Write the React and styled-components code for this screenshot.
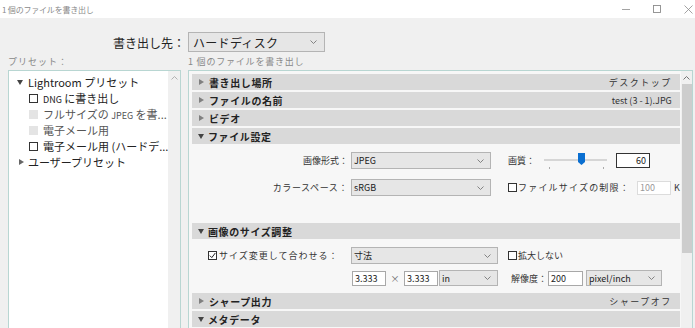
import React from 'react'
import styled, { createGlobalStyle } from 'styled-components'

const GlobalStyle = createGlobalStyle`
  html, body {
    margin: 0;
    padding: 0;
  }
  body {
    width: 695px;
    height: 328px;
    overflow: hidden;
    background: #f0f0f0;
    font-family: "Noto Sans CJK JP", "Liberation Sans", sans-serif;
    color: #333;
  }
  * { box-sizing: border-box; }
`

const Window = styled.div`
  width: 695px;
  height: 328px;
  display: flex;
  flex-direction: column;
  overflow: hidden;
  background: #f0f0f0;
`

const TitleBar = styled.div`
  height: 18px;
  flex-shrink: 0;
  background: #fff;
  display: flex;
  align-items: center;
  justify-content: space-between;
  padding-left: 2px;
`

const Title = styled.span`
  font-size: 8px;
  color: #8a8a8a;
  letter-spacing: -0.2px;
`

const WinControls = styled.div`
  display: flex;
  align-items: center;
  gap: 23px;
  padding-right: 2px;
  color: #8c8c8c;
`

const DestRow = styled.div`
  display: flex;
  align-items: center;
  margin-top: 14px;
  height: 20px;
`

const DestLabel = styled.span`
  width: 185px;
  text-align: right;
  font-size: 12px;
  color: #222;
  margin-right: 3px;
`

const Select = styled.div`
  width: ${p => p.w}px;
  height: ${p => p.h || 17}px;
  margin-left: ${p => p.ml || 0}px;
  border: 1px solid #b4b4b4;
  background: #e6e6e6;
  display: flex;
  align-items: center;
  justify-content: space-between;
  padding: 0 ${p => (p.big ? 7 : 6)}px 0 ${p => (p.big ? 4 : 2)}px;
  font-size: ${p => (p.big ? 12 : 9)}px;
  color: #222;
  flex-shrink: 0;
  letter-spacing: ${p => (p.big ? 0.3 : 0)}px;
`

const Columns = styled.div`
  flex: 1;
  display: grid;
  grid-template-columns: 173px 505px;
  column-gap: 7px;
  padding: 0 2px 0 8px;
  min-height: 0;
`

const Column = styled.div`
  display: flex;
  flex-direction: column;
  min-height: 0;
`

const Caption = styled.div`
  height: 18px;
  display: flex;
  align-items: center;
  font-size: 9px;
  color: #888;
  letter-spacing: ${p => p.ls || 0}px;
  flex-shrink: 0;
`

const Panel = styled.div`
  flex: 1;
  display: flex;
  border: 1px solid #b8d6d2;
  border-bottom: none;
  background: ${p => p.bg};
  min-height: 0;
  overflow: hidden;
`

const TreeList = styled.div`
  flex: 1;
  padding-top: 3px;
  background: #fff;
`

const TreeRow = styled.div`
  height: 16px;
  display: flex;
  align-items: center;
  padding-left: ${p => p.indent}px;
  font-size: 11px;
  color: ${p => (p.muted ? '#555' : '#222')};
  white-space: nowrap;
`

const Latin = styled.span`
  font-size: 9px;
`

const Arrow = styled.span`
  width: 0;
  height: 0;
  flex-shrink: 0;
  border-style: solid;
  ${p =>
    p.down
      ? `border-width: 5px 3px 0 3px; border-color: ${p.color} transparent transparent transparent;`
      : `border-width: 3.5px 0 3.5px 5px; border-color: transparent transparent transparent ${p.color};`}
  margin-right: ${p => p.gap}px;
  margin-left: ${p => p.ml || 0}px;
`

const Box = styled.span`
  width: 9px;
  height: 9px;
  flex-shrink: 0;
  border: 1px solid ${p => (p.disabled ? '#e4e4e4' : '#333')};
  background: ${p => (p.disabled ? '#e4e4e4' : '#fff')};
  margin-right: ${p => p.gap || 5}px;
  margin-left: ${p => p.ml || 0}px;
  display: flex;
  align-items: center;
  justify-content: center;
`

const Scrollbar = styled.div`
  width: 12px;
  flex-shrink: 0;
  background: #f0f0f0;
  display: flex;
  flex-direction: column;
  align-items: center;
`

const ScrollUp = styled.div`
  height: 13px;
  width: 100%;
  display: flex;
  align-items: center;
  justify-content: center;
`

const Thumb = styled.div`
  width: 10px;
  height: 169px;
  background: #cdcdcd;
`

const Sections = styled.div`
  flex: 1;
  padding: 3px 1px 0 3px;
  background: #f7f7f7;
`

const Header = styled.div`
  height: 16px;
  margin-bottom: 2px;
  background: #d9d9d9;
  display: flex;
  align-items: center;
  padding: 0 8px 0 6px;
  font-size: 10px;
  font-weight: 700;
  color: #222;
  letter-spacing: 0.6px;
`

const HeaderValue = styled.span`
  margin-left: auto;
  font-weight: 400;
  font-size: 9px;
  color: #333;
  letter-spacing: ${p => p.ls || 0}px;
`

const SectionBody = styled.div`
  height: ${p => p.h}px;
  padding-top: ${p => p.pt}px;
  display: flex;
  flex-direction: column;
  gap: ${p => p.gap}px;
`

const Row = styled.div`
  height: ${p => p.h || 17}px;
  display: flex;
  align-items: center;
  font-size: 9px;
  color: #333;
`

const FieldLabel = styled.span`
  width: ${p => p.w}px;
  flex-shrink: 0;
  margin-right: ${p => p.mr || 0}px;
  margin-left: ${p => p.ml || 0}px;
  white-space: nowrap;
  letter-spacing: ${p => p.ls || 0}px;
  display: flex;
  align-items: center;
  justify-content: ${p => (p.align === 'left' ? 'flex-start' : 'flex-end')};
`

const Input = styled.div`
  width: ${p => p.w}px;
  height: ${p => p.h || 15}px;
  flex-shrink: 0;
  margin-left: ${p => p.ml || 0}px;
  border: 1px solid ${p => p.border || '#a8a8a8'};
  background: #fff;
  display: flex;
  align-items: center;
  justify-content: ${p => (p.right ? 'flex-end' : 'flex-start')};
  padding: 0 3px 0 2px;
  font-size: 9px;
  color: ${p => p.color || '#222'};
`

const Slider = styled.div`
  width: 63px;
  height: 17px;
  flex-shrink: 0;
  position: relative;
  margin-right: 9px;
`

const Track = styled.div`
  position: absolute;
  left: 0;
  right: 0;
  top: 7px;
  height: 2px;
  background: #d6d6d6;
`

const SliderThumb = styled.div`
  position: absolute;
  left: 34px;
  top: 1px;
  width: 7px;
  height: 12px;
  background: #0a6fd1;
  clip-path: polygon(0 0, 100% 0, 100% 75%, 50% 100%, 0 75%);
`

const Tick = styled.div`
  position: absolute;
  left: ${p => p.x}px;
  top: 15px;
  width: 1px;
  height: 2px;
  background: #aaa;
`

const Times = styled.span`
  width: 18px;
  text-align: center;
  color: #666;
  font-size: 9px;
`

const Unit = styled.span`
  margin-left: 3px;
`

const Chevron = () => (
  <svg width="7" height="4" viewBox="0 0 7 4">
    <path d="M0.5 0.5 L3.5 3.5 L6.5 0.5" fill="none" stroke="#777" strokeWidth="0.9" />
  </svg>
)

const UpArrow = ({ color }) => (
  <svg width="7" height="4" viewBox="0 0 7 4">
    <path d="M0.5 3.5 L3.5 0.5 L6.5 3.5" fill="none" stroke={color} strokeWidth="0.9" />
  </svg>
)

const Check = () => (
  <svg width="7" height="7" viewBox="0 0 7 7">
    <path d="M0.8 3.6 L2.8 5.6 L6.3 1" fill="none" stroke="#222" strokeWidth="1" />
  </svg>
)

const Dropdown = ({ w, h, ml, big, children }) => (
  <Select w={w} h={h} ml={ml} big={big}>
    <span>{children}</span>
    <Chevron />
  </Select>
)

const SectionHeader = ({ open, title, value, vls }) => (
  <Header>
    <Arrow down={open} color={open ? '#444' : '#808080'} gap={open ? 4 : 5} ml={open ? 0 : 1} />
    {title}
    {value && <HeaderValue ls={vls}>{value}</HeaderValue>}
  </Header>
)

export default function App() {
  return (
    <>
      <GlobalStyle />
      <Window>
        <TitleBar>
          <Title>1 個のファイルを書き出し</Title>
          <WinControls>
            <svg width="8" height="8" viewBox="0 0 8 8">
              <path d="M0 4.5 H8" stroke="currentColor" strokeWidth="0.8" />
            </svg>
            <svg width="8" height="8" viewBox="0 0 8 8">
              <rect x="0.5" y="0.5" width="7" height="7" fill="none" stroke="currentColor" strokeWidth="0.9" />
            </svg>
            <svg width="9" height="9" viewBox="0 0 9 9">
              <path d="M0.5 0.5 L8.5 8.5 M8.5 0.5 L0.5 8.5" stroke="currentColor" strokeWidth="0.8" />
            </svg>
          </WinControls>
        </TitleBar>

        <DestRow>
          <DestLabel>書き出し先：</DestLabel>
          <Dropdown w={137} h={20} big>ハードディスク</Dropdown>
        </DestRow>

        <Columns>
          <Column>
            <Caption ls={1}>プリセット：</Caption>
            <Panel bg="#fff">
              <TreeList>
                <TreeRow indent={8}>
                  <Arrow down color="#444" gap={5} />
                  Lightroom プリセット
                </TreeRow>
                <TreeRow indent={20}>
                  <Box />
                  <span><Latin>DNG</Latin> に書き出し</span>
                </TreeRow>
                <TreeRow indent={20} muted>
                  <Box disabled />
                  <span>フルサイズの <Latin>JPEG</Latin> を書...</span>
                </TreeRow>
                <TreeRow indent={20} muted>
                  <Box disabled />
                  電子メール用
                </TreeRow>
                <TreeRow indent={20}>
                  <Box />
                  電子メール用 (ハードデ...
                </TreeRow>
                <TreeRow indent={10}>
                  <Arrow color="#666" gap={4} />
                  ユーザープリセット
                </TreeRow>
              </TreeList>
              <Scrollbar>
                <ScrollUp>
                  <UpArrow color="#aaa" />
                </ScrollUp>
              </Scrollbar>
            </Panel>
          </Column>

          <Column>
            <Caption ls={0.8}>1 個のファイルを書き出し</Caption>
            <Panel bg="#f7f7f7">
              <Sections>
                <SectionHeader title="書き出し場所" value="デスクトップ" vls={1.5} />
                <SectionHeader title="ファイルの名前" value="test (3 - 1).JPG" />
                <SectionHeader title="ビデオ" />
                <SectionHeader open title="ファイル設定" />
                <SectionBody h={77} pt={6} gap={10}>
                  <Row>
                    <FieldLabel w={156} mr={3}>画像形式：</FieldLabel>
                    <Dropdown w={140}>JPEG</Dropdown>
                    <FieldLabel w={36} ml={17} align="left">画質：</FieldLabel>
                    <Slider>
                      <Track />
                      <Tick x={5} />
                      <Tick x={59} />
                      <SliderThumb />
                    </Slider>
                    <Input w={34} h={15} border="#333" right>60</Input>
                  </Row>
                  <Row>
                    <FieldLabel w={156} mr={3} ls={0.6}>カラースペース：</FieldLabel>
                    <Dropdown w={140}>sRGB</Dropdown>
                    <FieldLabel w={129} ml={17} align="left" ls={1.2}>
                      <Box gap={1} />
                      ファイルサイズの制限：
                    </FieldLabel>
                    <Input w={34} h={14} border="#dcdcdc" color="#999">100</Input>
                    <Unit>K</Unit>
                  </Row>
                </SectionBody>
                <SectionHeader open title="画像のサイズ調整" />
                <SectionBody h={52} pt={6} gap={6}>
                  <Row>
                    <FieldLabel w={143} ml={16} align="left" ls={1}>
                      <Box gap={2}>
                        <Check />
                      </Box>
                      サイズ変更して合わせる：
                    </FieldLabel>
                    <Dropdown w={147}>寸法</Dropdown>
                    <FieldLabel w={80} ml={10} align="left">
                      <Box gap={1} />
                      拡大しない
                    </FieldLabel>
                  </Row>
                  <Row h={16}>
                    <Input w={34} ml={160}>3.333</Input>
                    <Times>×</Times>
                    <Input w={34}>3.333</Input>
                    <Dropdown w={59} h={16} ml={1}>in</Dropdown>
                    <FieldLabel w={34} ml={15} mr={1}>解像度：</FieldLabel>
                    <Input w={35}>200</Input>
                    <Dropdown w={76} h={16} ml={3}>pixel/inch</Dropdown>
                  </Row>
                </SectionBody>
                <SectionHeader title="シャープ出力" value="シャープオフ" vls={1.5} />
                <SectionHeader open title="メタデータ" />
              </Sections>
              <Scrollbar>
                <ScrollUp>
                  <UpArrow color="#666" />
                </ScrollUp>
                <Thumb />
              </Scrollbar>
            </Panel>
          </Column>
        </Columns>
      </Window>
    </>
  )
}
